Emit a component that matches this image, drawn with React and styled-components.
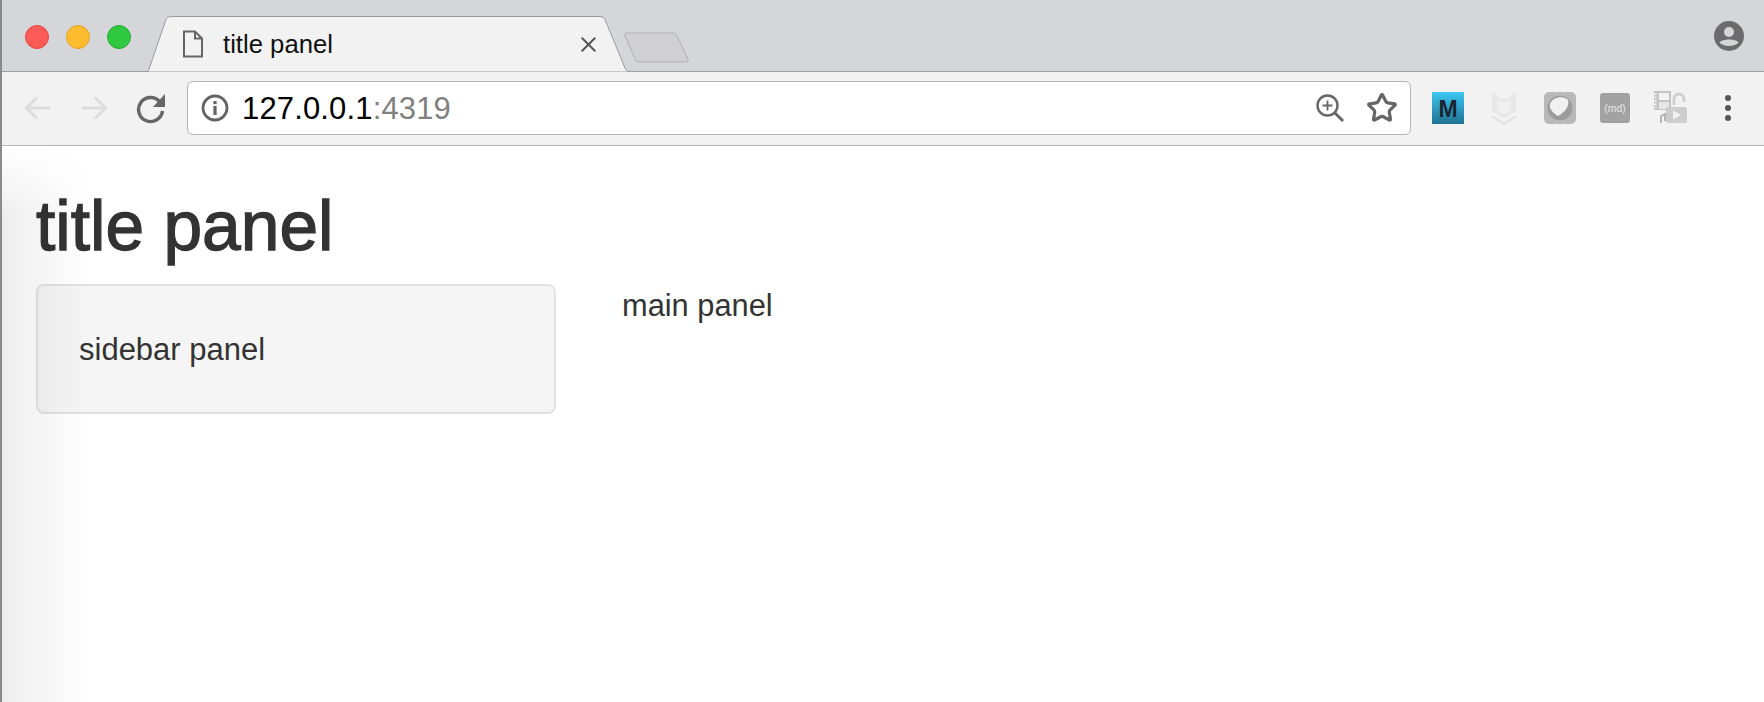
import styled, { createGlobalStyle } from "styled-components";
import { X, Star } from "lucide-react";

const GlobalStyle = createGlobalStyle`
  html, body {
    margin: 0;
    height: 100%;
    background: white;
    overflow: hidden;
  }
  body {
    font-family: "Liberation Sans", Arial, sans-serif;
  }
`;

const App = () => {
  return (
    <>
      <GlobalStyle />
      <Window>
        <TabBar>
          <Lights>
            <Light color="#fc5b57" edge="#e2463f" />
            <Light color="#ffbc2e" edge="#e1a325" />
            <Light color="#2fc83f" edge="#27aa35" />
          </Lights>
          <TabArea>
            <TabShape viewBox="0 0 484 56" preserveAspectRatio="none">
              <path d="M0 55.5 H1 Q2.5 55.5 3 53 L20 3.5 Q21 0.5 25 0.5 H454 Q458 0.5 459 3.5 L479 52 Q480 55.5 484 55.5" fill="#f2f2f2" stroke="#9a9a9c" />
            </TabShape>
            <PageIcon width="22" height="28" viewBox="0 0 22 28">
              <path d="M2 1.5 H13 L20 8.5 V26.5 H2 Z M13 1.5 V8.5 H20" fill="none" stroke="#666" strokeWidth="2" />
            </PageIcon>
            <TabTitle>title panel</TabTitle>
            <CloseIcon size={25} strokeWidth={1.9} />
          </TabArea>
          <NewTab viewBox="0 0 66 31" width="66" height="31">
            <path d="M2 1 H49 Q52 1 53 4 L64 27 Q65 30 62 30 H15 Q12 30 11 27 L1 4 Q0 1 2 1 Z" fill="#d0d0d2" stroke="#b0b0b3" />
          </NewTab>
          <Avatar width="32" height="32" viewBox="0 0 32 32">
            <circle cx="16" cy="16" r="15" fill="#6b6b6b" />
            <circle cx="16" cy="12" r="5" fill="#d5d6da" />
            <path d="M6.5 22.5 C9 18.5 23 18.5 25.5 22.5 C22 27 10 27 6.5 22.5 Z" fill="#d5d6da" />
          </Avatar>
        </TabBar>

        <Toolbar>
          <NavButtons>
            <NavIcon width="30" height="30" viewBox="0 0 30 30">
              <path d="M27 15 H4 M14 4.5 L3.5 15 L14 25.5" fill="none" stroke="#dcdcdc" strokeWidth="3" />
            </NavIcon>
            <NavIcon width="30" height="30" viewBox="0 0 30 30">
              <path d="M3 15 H26 M16 4.5 L26.5 15 L16 25.5" fill="none" stroke="#dcdcdc" strokeWidth="3" />
            </NavIcon>
            <NavIcon width="32" height="32" viewBox="0 0 32 32">
              <path d="M24.5 9.5 A12 12 0 1 0 27.5 19" fill="none" stroke="#666" strokeWidth="3.4" />
              <path d="M30 2 V15 H18 Z" fill="#666" />
            </NavIcon>
          </NavButtons>
          <Omnibox>
            <InfoIcon width="28" height="28" viewBox="0 0 28 28">
              <circle cx="14" cy="14" r="12" fill="none" stroke="#636363" strokeWidth="2.8" />
              <rect x="12.4" y="7" width="3.2" height="3.2" fill="#636363" />
              <rect x="12.4" y="12" width="3.2" height="9" fill="#636363" />
            </InfoIcon>
            <Url>
              127.0.0.1<Port>:4319</Port>
            </Url>
            <ZoomIcon width="30" height="30" viewBox="0 0 30 30">
              <circle cx="12.5" cy="12.5" r="10" fill="none" stroke="#666" strokeWidth="2.4" />
              <path d="M12.5 7.5 V17.5 M7.5 12.5 H17.5" stroke="#666" strokeWidth="1.8" />
              <path d="M20 20 L28 28" stroke="#666" strokeWidth="3" />
            </ZoomIcon>
            <StarIcon size={32} strokeWidth={2.4} color="#666" />
          </Omnibox>
          <Extensions>
            <Tile width="32" height="32" viewBox="0 0 32 32">
              <defs>
                <linearGradient id="mBlue" x1="0" y1="0" x2="0" y2="1">
                  <stop offset="0" stopColor="#3cc8f4" />
                  <stop offset="1" stopColor="#1f7192" />
                </linearGradient>
              </defs>
              <rect width="32" height="32" fill="url(#mBlue)" />
              <text x="16" y="25" fontSize="23" fontWeight="700" textAnchor="middle" fill="#1a2630" fontFamily="Liberation Sans">M</text>
            </Tile>
            <Tile $lead width="26" height="34" viewBox="0 0 26 34">
              <path d="M1 2 L13 9 L25 2 V21 L13 27 L1 21 Z" fill="#e7e7e7" />
              <path d="M6 8 L13 12 L20 8 V19 L13 23 L6 19 Z" fill="#f0f0f0" />
              <path d="M1 24 L13 31 L25 24 V27 L13 34 L1 27 Z" fill="#e4e4e4" />
            </Tile>
            <Tile $lead width="32" height="32" viewBox="0 0 32 32">
              <rect width="32" height="32" rx="5" fill="#b9b9b9" />
              <circle cx="16" cy="16" r="12.5" fill="#9c9c9c" />
              <path d="M6 12 C8 5 20 3 24 8 C26 14 20 21 14 24 C9 21 5 17 6 12 Z" fill="#f1f1f1" />
            </Tile>
            <Tile width="30" height="30" viewBox="0 0 30 30">
              <rect width="30" height="30" rx="3" fill="#a2a2a2" />
              <text x="15" y="18.5" fontSize="10.5" textAnchor="middle" fill="#e6e6e6" fontFamily="Liberation Sans">(md)</text>
            </Tile>
            <Tile width="34" height="34" viewBox="0 0 34 34">
              <rect x="0" y="0" width="17" height="19" fill="#c4c4c4" />
              <rect x="5" y="2" width="10" height="7" fill="#f2f2f2" />
              <rect x="5" y="11" width="10" height="7" fill="#e6e6e6" />
              <path d="M1.5 2 V17" stroke="#f2f2f2" strokeWidth="2" strokeDasharray="2 1.5" />
              <path d="M20 14 V8 A5 5 0 0 1 30 8 V11" fill="none" stroke="#cfcfcf" strokeWidth="3" />
              <rect x="12" y="16" width="21" height="16" rx="2" fill="#cdcdcd" />
              <path d="M19 19.5 L27 24 L19 28.5 Z" fill="#f2f2f2" />
              <path d="M7 32 V25 L11 23 V30" fill="none" stroke="#b5b5b5" strokeWidth="2" />
            </Tile>
            <Dots>
              <Dot />
              <Dot />
              <Dot />
            </Dots>
          </Extensions>
        </Toolbar>

        <Page>
          <EdgeShade />
          <Title>title panel</Title>
          <Columns>
            <Sidebar>sidebar panel</Sidebar>
            <Main>main panel</Main>
          </Columns>
        </Page>
      </Window>
    </>
  );
};

export default App;

const Window = styled.div`
  position: relative;
  display: flex;
  flex-direction: column;
  width: 1764px;
  height: 702px;
  overflow: hidden;
  &::after {
    content: "";
    position: absolute;
    left: 0;
    top: 0;
    bottom: 0;
    width: 2px;
    background: #8a8a8a;
  }
`;

const TabBar = styled.div`
  display: flex;
  align-items: flex-end;
  height: 72px;
  flex: none;
  box-sizing: border-box;
  padding-left: 146px;
  background: #d5d6da;
  border-bottom: 1px solid #9d9d9f;
  position: relative;
`;

const Lights = styled.div`
  position: absolute;
  left: 25px;
  top: 25px;
  display: flex;
  gap: 17px;
`;

const Light = styled.span`
  width: 24px;
  height: 24px;
  box-sizing: border-box;
  border-radius: 50%;
  background: ${(p) => p.color};
  border: 1px solid ${(p) => p.edge};
`;

const TabArea = styled.div`
  position: relative;
  width: 484px;
  height: 56px;
  margin-bottom: -1px;
  display: flex;
  align-items: center;
  padding: 0 36px 0 36px;
  box-sizing: border-box;
`;

const TabShape = styled.svg`
  position: absolute;
  left: 0;
  top: 0;
  width: 100%;
  height: 100%;
`;

const PageIcon = styled.svg`
  position: relative;
  flex: none;
`;

const TabTitle = styled.span`
  position: relative;
  margin-left: 19px;
  font-size: 25.7px;
  color: #111;
  flex: 1;
`;

const CloseIcon = styled(X)`
  position: relative;
  color: #555;
  margin-right: -7px;
`;

const NewTab = styled.svg`
  margin: 0 0 8px -6px;
  flex: none;
`;

const Avatar = styled.svg`
  position: absolute;
  right: 19px;
  top: 20px;
`;

const Toolbar = styled.div`
  display: flex;
  align-items: center;
  height: 74px;
  flex: none;
  box-sizing: border-box;
  background: #f2f2f2;
  border-bottom: 1px solid #b5b5b5;
  padding: 0 19px 2px 23px;
`;

const NavButtons = styled.div`
  display: flex;
  align-items: center;
  gap: 26px;
  width: 164px;
  flex: none;
`;

const NavIcon = styled.svg`
  flex: none;
`;

const Omnibox = styled.div`
  display: flex;
  align-items: center;
  width: 1224px;
  height: 54px;
  flex: none;
  box-sizing: border-box;
  background: white;
  border: 1px solid #b4b4b4;
  border-radius: 6px;
  padding: 0 12px 0 13px;
`;

const InfoIcon = styled.svg`
  flex: none;
`;

const Url = styled.div`
  margin-left: 13px;
  padding-top: 2px;
  font-size: 31px;
  letter-spacing: 0.15px;
  color: #000;
  flex: 1;
`;

const Port = styled.span`
  color: #808080;
`;

const ZoomIcon = styled.svg`
  flex: none;
  margin-right: 21px;
`;

const StarIcon = styled(Star)`
  flex: none;
`;

const Extensions = styled.div`
  display: flex;
  align-items: center;
  gap: 24px;
  flex: 1;
  padding-left: 21px;
`;

const Tile = styled.svg`
  flex: none;
  margin-left: ${(p) => (p.$lead ? "3px" : "0")};
`;

const Dots = styled.div`
  display: flex;
  flex-direction: column;
  gap: 4px;
  margin-left: 13px;
`;

const Dot = styled.span`
  width: 6px;
  height: 6px;
  border-radius: 50%;
  background: #555;
`;

const Page = styled.div`
  position: relative;
  flex: 1;
  padding: 0 36px;
  color: #333;
`;

const EdgeShade = styled.div`
  position: absolute;
  left: 0;
  top: 0;
  bottom: 0;
  width: 90px;
  background: linear-gradient(to right, rgba(0, 0, 0, 0.07), rgba(0, 0, 0, 0));
  mask-image: linear-gradient(to bottom, transparent, black 70px);
  pointer-events: none;
`;

const Title = styled.h1`
  margin: 0;
  padding-top: 44px;
  font-size: 69.5px;
  font-weight: 400;
  -webkit-text-stroke: 1.3px #333;
  line-height: 72px;
`;

const Columns = styled.div`
  display: flex;
  margin-top: 22px;
`;

const Sidebar = styled.div`
  width: 520px;
  height: 130px;
  box-sizing: border-box;
  padding: 42px 41px;
  font-size: 31px;
  line-height: 44px;
  background: #f5f5f5;
  border: 2px solid #e3e3e3;
  border-radius: 8px;
  flex: none;
`;

const Main = styled.div`
  margin-left: 66px;
  font-size: 30.8px;
  line-height: 44px;
`;
